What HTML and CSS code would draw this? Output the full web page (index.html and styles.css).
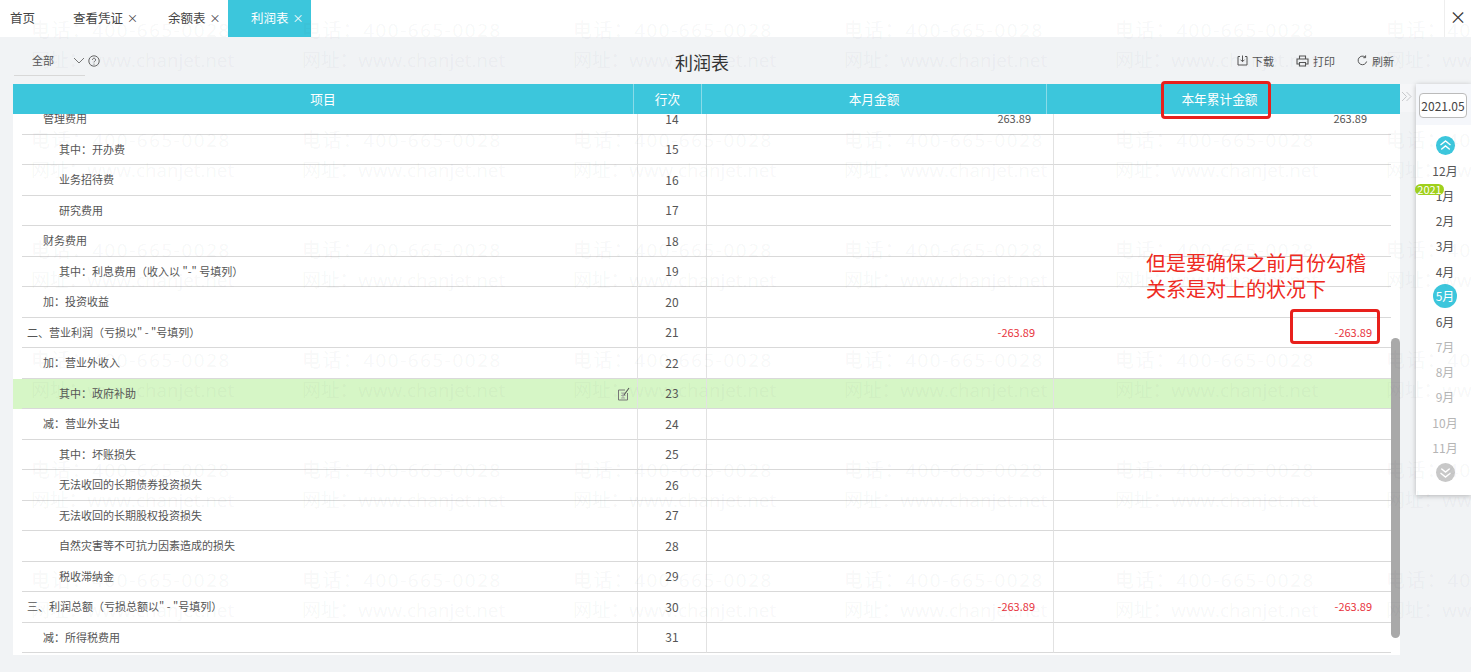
FILE: index.html
```html
<!DOCTYPE html>
<html lang="zh-CN">
<head>
    <meta charset="UTF-8" />
    <title>利润表</title>
    <link rel="stylesheet" href="styles.css">
</head>
<body>

<div class="tabs">
    <div class="tab tab-home">首页</div>
    <div class="tab tab-voucher">查看凭证<span class="tab-x">×</span></div>
    <div class="tab tab-balance">余额表<span class="tab-x">×</span></div>
    <div class="tab tab-active">利润表<span class="tab-x">×</span></div>
    <div class="tabs-close">×</div>
</div>

<div class="toolbar">
    <div class="toolbar-left">
        <div class="select">全部
            <svg width="12" height="7" viewBox="0 0 12 7"><path d="M1 1l5 5 5-5" fill="none" stroke="#777" stroke-width="1"/></svg>
        </div>
        <svg class="help" width="12" height="12" viewBox="0 0 12 12">
            <circle cx="6" cy="6" r="5.2" fill="none" stroke="#666" stroke-width="1"/>
            <path d="M4.4 4.8a1.6 1.6 0 1 1 2.4 1.4c-.6.3-.8.6-.8 1.2" fill="none" stroke="#666" stroke-width="1"/>
            <circle cx="6" cy="9.1" r=".6" fill="#666"/>
        </svg>
    </div>
    <h1 class="title">利润表</h1>
    <div class="actions">
        <span class="action">
            <svg width="11" height="11" viewBox="0 0 11 11"><path d="M3 1.500H1V10h9V1.500H8M5.500 .5v6M3.500 4.700l2 2 2-2" fill="none" stroke="#555" stroke-width="1"/></svg>
            下载
        </span>
        <span class="action">
            <svg width="13" height="12" viewBox="0 0 13 12"><path d="M3.500 4V1h6v3M3.500 9H1V4h11v5H9.500M3.500 7.500h6V11h-6z" fill="none" stroke="#555" stroke-width="1.100"/></svg>
            打印
        </span>
        <span class="action">
            <svg width="11" height="11" viewBox="0 0 11 11"><path d="M9.600 6.500A4.300 4.300 0 1 1 8.300 2.200M8.600 .4v2.300H6.300" fill="none" stroke="#555" stroke-width="1"/></svg>
            刷新
        </span>
    </div>
</div>

<div class="content">
    <div class="report">
        <div class="report-head">
            <div class="head-cell">项目</div>
            <div class="head-cell">行次</div>
            <div class="head-cell">本月金额</div>
            <div class="head-cell head-last">本年累计金额</div>
        </div>
        <div class="report-body">
            <div class="rows">
                <div class="row"><div class="cell name lv1">管理费用</div><div class="cell no">14</div><div class="cell num inset">263.89</div><div class="cell num inset">263.89</div></div>
                <div class="row"><div class="cell name lv2">其中：开办费</div><div class="cell no">15</div><div class="cell num"></div><div class="cell num"></div></div>
                <div class="row"><div class="cell name lv2">业务招待费</div><div class="cell no">16</div><div class="cell num"></div><div class="cell num"></div></div>
                <div class="row"><div class="cell name lv2">研究费用</div><div class="cell no">17</div><div class="cell num"></div><div class="cell num"></div></div>
                <div class="row"><div class="cell name lv1">财务费用</div><div class="cell no">18</div><div class="cell num"></div><div class="cell num"></div></div>
                <div class="row"><div class="cell name lv2">其中：利息费用（收入以 "-" 号填列）</div><div class="cell no">19</div><div class="cell num"></div><div class="cell num"></div></div>
                <div class="row"><div class="cell name lv1">加：投资收益</div><div class="cell no">20</div><div class="cell num"></div><div class="cell num"></div></div>
                <div class="row"><div class="cell name lv0">二、营业利润（亏损以" - "号填列）</div><div class="cell no">21</div><div class="cell num neg">-263.89</div><div class="cell num neg">-263.89</div></div>
                <div class="row"><div class="cell name lv1">加：营业外收入</div><div class="cell no">22</div><div class="cell num"></div><div class="cell num"></div></div>
                <div class="row row-on"><div class="cell name lv2">其中：政府补助
                    <svg class="edit" width="13" height="14" viewBox="0 0 13 14"><path d="M8 3H1.500v10h9V6" fill="none" stroke="#777" stroke-width="1"/><path d="M4 6h4M4 8.500h4.500M6 6v5M4 11h4" fill="none" stroke="#999" stroke-width=".8"/><path d="M7 8l5-7" stroke="#555" stroke-width="1.100"/></svg>
                </div><div class="cell no">23</div><div class="cell num"></div><div class="cell num"></div></div>
                <div class="row"><div class="cell name lv1">减：营业外支出</div><div class="cell no">24</div><div class="cell num"></div><div class="cell num"></div></div>
                <div class="row"><div class="cell name lv2">其中：坏账损失</div><div class="cell no">25</div><div class="cell num"></div><div class="cell num"></div></div>
                <div class="row"><div class="cell name lv2">无法收回的长期债券投资损失</div><div class="cell no">26</div><div class="cell num"></div><div class="cell num"></div></div>
                <div class="row"><div class="cell name lv2">无法收回的长期股权投资损失</div><div class="cell no">27</div><div class="cell num"></div><div class="cell num"></div></div>
                <div class="row"><div class="cell name lv2">自然灾害等不可抗力因素造成的损失</div><div class="cell no">28</div><div class="cell num"></div><div class="cell num"></div></div>
                <div class="row"><div class="cell name lv2">税收滞纳金</div><div class="cell no">29</div><div class="cell num"></div><div class="cell num"></div></div>
                <div class="row"><div class="cell name lv0">三、利润总额（亏损总额以" - "号填列）</div><div class="cell no">30</div><div class="cell num neg">-263.89</div><div class="cell num neg">-263.89</div></div>
                <div class="row"><div class="cell name lv1">减：所得税费用</div><div class="cell no">31</div><div class="cell num"></div><div class="cell num"></div></div>
            </div>
            <div class="scroll-thumb"></div>
        </div>
    </div>

    <div class="expander">
        <svg width="11" height="11" viewBox="0 0 11 11"><path d="M1 1l4.500 4.500L1 10M5.500 1L10 5.500 5.500 10" fill="none" stroke="#c6c8cb" stroke-width="1"/></svg>
    </div>

    <div class="datebar">
        <div class="date-top"><div class="date-input">2021.05</div></div>
        <div class="months">
            <div class="arrow arrow-up">
                <svg width="12" height="11" viewBox="0 0 12 11"><path d="M1 5l5-4 5 4M1 10l5-4 5 4" fill="none" stroke="#fff" stroke-width="1.400"/></svg>
            </div>
            <div class="month">12月</div>
            <div class="month">1月</div>
            <div class="month">2月</div>
            <div class="month">3月</div>
            <div class="month">4月</div>
            <div class="month"><span class="month-on">5月</span></div>
            <div class="month">6月</div>
            <div class="month month-off">7月</div>
            <div class="month month-off">8月</div>
            <div class="month month-off">9月</div>
            <div class="month month-off">10月</div>
            <div class="month month-off">11月</div>
            <div class="arrow arrow-down">
                <svg width="12" height="11" viewBox="0 0 12 11"><path d="M1 1l5 4 5-4M1 6l5 4 5-4" fill="none" stroke="#fff" stroke-width="1.400"/></svg>
            </div>
        </div>
        <span class="year-badge">2021</span>
    </div>
</div>

<!-- watermark sits over the page, only the table header covers it -->
<div class="watermark">
    <div class="mark"><p class="mark-tel">电话：400-665-0028</p><p>网址：www.chanjet.net</p></div>
    <div class="mark"><p class="mark-tel">电话：400-665-0028</p><p>网址：www.chanjet.net</p></div>
    <div class="mark"><p class="mark-tel">电话：400-665-0028</p><p>网址：www.chanjet.net</p></div>
    <div class="mark"><p class="mark-tel">电话：400-665-0028</p><p>网址：www.chanjet.net</p></div>
    <div class="mark"><p class="mark-tel">电话：400-665-0028</p><p>网址：www.chanjet.net</p></div>
    <div class="mark"><p class="mark-tel">电话：400-665-0028</p><p>网址：www.chanjet.net</p></div>
    <div class="mark"><p class="mark-tel">电话：400-665-0028</p><p>网址：www.chanjet.net</p></div>
    <div class="mark"><p class="mark-tel">电话：400-665-0028</p><p>网址：www.chanjet.net</p></div>
    <div class="mark"><p class="mark-tel">电话：400-665-0028</p><p>网址：www.chanjet.net</p></div>
    <div class="mark"><p class="mark-tel">电话：400-665-0028</p><p>网址：www.chanjet.net</p></div>
    <div class="mark"><p class="mark-tel">电话：400-665-0028</p><p>网址：www.chanjet.net</p></div>
    <div class="mark"><p class="mark-tel">电话：400-665-0028</p><p>网址：www.chanjet.net</p></div>
    <div class="mark"><p class="mark-tel">电话：400-665-0028</p><p>网址：www.chanjet.net</p></div>
    <div class="mark"><p class="mark-tel">电话：400-665-0028</p><p>网址：www.chanjet.net</p></div>
    <div class="mark"><p class="mark-tel">电话：400-665-0028</p><p>网址：www.chanjet.net</p></div>
    <div class="mark"><p class="mark-tel">电话：400-665-0028</p><p>网址：www.chanjet.net</p></div>
    <div class="mark"><p class="mark-tel">电话：400-665-0028</p><p>网址：www.chanjet.net</p></div>
    <div class="mark"><p class="mark-tel">电话：400-665-0028</p><p>网址：www.chanjet.net</p></div>
    <div class="mark"><p class="mark-tel">电话：400-665-0028</p><p>网址：www.chanjet.net</p></div>
    <div class="mark"><p class="mark-tel">电话：400-665-0028</p><p>网址：www.chanjet.net</p></div>
    <div class="mark"><p class="mark-tel">电话：400-665-0028</p><p>网址：www.chanjet.net</p></div>
    <div class="mark"><p class="mark-tel">电话：400-665-0028</p><p>网址：www.chanjet.net</p></div>
    <div class="mark"><p class="mark-tel">电话：400-665-0028</p><p>网址：www.chanjet.net</p></div>
    <div class="mark"><p class="mark-tel">电话：400-665-0028</p><p>网址：www.chanjet.net</p></div>
    <div class="mark"><p class="mark-tel">电话：400-665-0028</p><p>网址：www.chanjet.net</p></div>
    <div class="mark"><p class="mark-tel">电话：400-665-0028</p><p>网址：www.chanjet.net</p></div>
    <div class="mark"><p class="mark-tel">电话：400-665-0028</p><p>网址：www.chanjet.net</p></div>
    <div class="mark"><p class="mark-tel">电话：400-665-0028</p><p>网址：www.chanjet.net</p></div>
    <div class="mark"><p class="mark-tel">电话：400-665-0028</p><p>网址：www.chanjet.net</p></div>
    <div class="mark"><p class="mark-tel">电话：400-665-0028</p><p>网址：www.chanjet.net</p></div>
    <div class="mark"><p class="mark-tel">电话：400-665-0028</p><p>网址：www.chanjet.net</p></div>
    <div class="mark"><p class="mark-tel">电话：400-665-0028</p><p>网址：www.chanjet.net</p></div>
    <div class="mark"><p class="mark-tel">电话：400-665-0028</p><p>网址：www.chanjet.net</p></div>
    <div class="mark"><p class="mark-tel">电话：400-665-0028</p><p>网址：www.chanjet.net</p></div>
    <div class="mark"><p class="mark-tel">电话：400-665-0028</p><p>网址：www.chanjet.net</p></div>
    <div class="mark"><p class="mark-tel">电话：400-665-0028</p><p>网址：www.chanjet.net</p></div>
</div>

<!-- hand drawn notes on top of the screenshot -->
<div class="note-box note-box-head"></div>
<div class="note-box note-box-value"></div>
<div class="note-text">但是要确保之前月份勾稽<br>关系是对上的状况下</div>

</body>
</html>
```

FILE: styles.css
```css
* {
    box-sizing: border-box;
}

html, body {
    margin: 0;
    height: 672px;
    overflow: hidden;
}

body {
    position: relative;
    background: #f1f3f5;
    color: #555;
    font-family: "Noto Sans CJK SC", "Noto Sans", sans-serif;
    font-size: 11px;
}

/* tabs */
.tabs {
    display: flex;
    height: 37px;
    background: #fff;
}

.tab {
    height: 37px;
    line-height: 36px;
    font-size: 12.500px;
    color: #444;
    white-space: nowrap;
}

.tab-home {
    margin-left: 10px;
    width: 63px;
}

.tab-voucher {
    width: 95px;
}

.tab-balance {
    width: 60px;
}

.tab-active {
    width: 83px;
    padding-left: 23px;
    background: #3cc6dc;
    color: #fff;
}

.tab-x {
    margin-left: 4px;
    font-size: 11px;
}

.tabs-close {
    margin-left: auto;
    width: 27px;
    height: 37px;
    line-height: 33px;
    text-align: center;
    font-size: 17px;
    color: #333;
    border-left: 1px solid #eee;
}

/* toolbar */
.toolbar {
    display: grid;
    grid-template-columns: 1fr auto 1fr;
    align-items: center;
    height: 47px;
    padding: 0 77px 0 14px;
}

.toolbar-left {
    display: flex;
    align-items: center;
    gap: 3px;
}

.select {
    display: flex;
    align-items: center;
    justify-content: space-between;
    width: 71px;
    height: 28px;
    padding: 0 0 2px 18px;
    margin-top: 2px;
    border-bottom: 1px solid #d8d8d8;
    font-size: 11px;
}

.help {
    margin-top: 1px;
}

.title {
    margin: 0 4px -2px 0;
    font-size: 18px;
    font-weight: 400;
    color: #333;
}

.actions {
    display: flex;
    justify-content: flex-end;
    gap: 22px;
    margin-top: 0;
}

.action {
    display: flex;
    align-items: center;
    gap: 4px;
    font-size: 11px;
}

/* report table */
.content {
    display: flex;
    align-items: flex-start;
    padding-left: 13px;
}

.report {
    width: 1387px;
}

.report-head {
    position: relative;
    z-index: 2;
    display: grid;
    grid-template-columns: 621px 68px 345px 353px;
    height: 30px;
    background: #3cc6dc;
    color: #fff;
    font-size: 12.700px;
    line-height: 30px;
    text-align: center;
}

.head-cell {
    border-right: 1px solid #8adbe8;
}

.head-last {
    padding-right: 8px;
    border-right: none;
}

.report-body {
    position: relative;
    height: 541px;
    overflow: hidden;
    background: #fff;
}

/* first row is scrolled half under the header */
.rows {
    width: 1378px;
    margin-top: -10px;
}

.row {
    display: grid;
    grid-template-columns: 615px 69px 347px 338px;
    height: 30.500px;
    padding-left: 9px;
}

.row-on {
    background: #d6f6c6;
}

.cell {
    display: flex;
    align-items: center;
    border-bottom: 1px solid #d9d9d9;
    padding-bottom: 1px;
}

.name {
    position: relative;
}

.lv0 {
    padding-left: 5px;
}

.lv1 {
    padding-left: 21px;
}

.lv2 {
    padding-left: 37px;
}

.no {
    justify-content: center;
    border-left: 1px solid #e2e2e2;
    font-size: 12px;
}

.num {
    justify-content: flex-end;
    padding-right: 18px;
    border-left: 1px solid #e2e2e2;
}

.num + .num {
    padding-right: 19px;
}

.inset {
    padding-right: 22px;
}

.num + .inset {
    padding-right: 24px;
}

.neg {
    color: #e8333c;
}

.edit {
    position: absolute;
    right: 7px;
    top: 8px;
}

.scroll-thumb {
    position: absolute;
    left: 1378px;
    top: 224px;
    width: 9px;
    height: 300px;
    border-radius: 5px;
    background: #a9a9a9;
}

/* date picker on the right */
.expander {
    width: 16px;
    height: 28px;
    padding: 7px 0 0 1px;
    background: #f5f6f8;
}

.expander svg {
    display: block;
}

.datebar {
    position: relative;
    width: 55px;
    height: 411px;
    background: #fff;
    box-shadow: 0 1px 5px rgba(0,0,0,0.25);
}

.date-top {
    height: 41px;
    padding: 9px 0 0 3px;
    background: #f5f7fb;
}

.date-input {
    width: 48px;
    height: 25px;
    border: 1px solid #bbb;
    border-radius: 4px;
    background: #fff;
    color: #444;
    font-size: 12px;
    line-height: 23px;
    text-align: center;
}

.months {
    display: flex;
    flex-direction: column;
    align-items: center;
    padding: 7.500px 0 0 3px;
}

.month,
.arrow {
    display: flex;
    align-items: center;
    justify-content: center;
    height: 25.200px;
    font-size: 12px;
    flex-shrink: 0;
}

.month-off {
    color: #b5b5b5;
}

.month-on {
    display: block;
    width: 24px;
    height: 24px;
    border-radius: 50%;
    background: #3cc6dc;
    color: #fff;
    line-height: 24px;
    text-align: center;
}

.arrow svg {
    display: block;
    width: 19px;
    height: 19px;
    padding: 4px 3.500px;
    border-radius: 50%;
    background: #3cc6dc;
}

.arrow-down svg {
    background: #c8c8c8;
}

.year-badge {
    position: absolute;
    left: -1px;
    top: 100px;
    width: 29px;
    height: 11px;
    border-radius: 6px;
    background: #9fd01c;
    color: #fff;
    font-size: 11px;
    line-height: 11px;
    text-align: center;
}

/* watermark */
.watermark {
    position: absolute;
    left: 31px;
    top: 18px;
    display: grid;
    grid-template-columns: repeat(6, 271px);
    grid-auto-rows: 110px;
    width: 1440px;
    height: 654px;
    overflow: hidden;
    z-index: 1;
    pointer-events: none;
    color: rgba(60,70,90,0.055);
    font-family: "Open Sans", "Noto Sans CJK SC", sans-serif;
    font-size: 18.800px;
    white-space: nowrap;
}

.mark p {
    margin: 0;
    height: 30px;
    line-height: 24px;
}

.mark-tel {
    letter-spacing: 1.600px;
}

/* annotations */
.note-box {
    position: absolute;
    z-index: 3;
    border: 3px solid #e8201c;
    border-radius: 4px;
}

.note-box-head {
    left: 1161px;
    top: 81px;
    width: 110px;
    height: 38px;
}

.note-box-value {
    left: 1290px;
    top: 309px;
    width: 90px;
    height: 35px;
}

.note-text {
    position: absolute;
    left: 1146px;
    top: 250px;
    z-index: 3;
    color: #ee2a22;
    font-size: 20px;
    line-height: 26px;
    white-space: nowrap;
}
```
